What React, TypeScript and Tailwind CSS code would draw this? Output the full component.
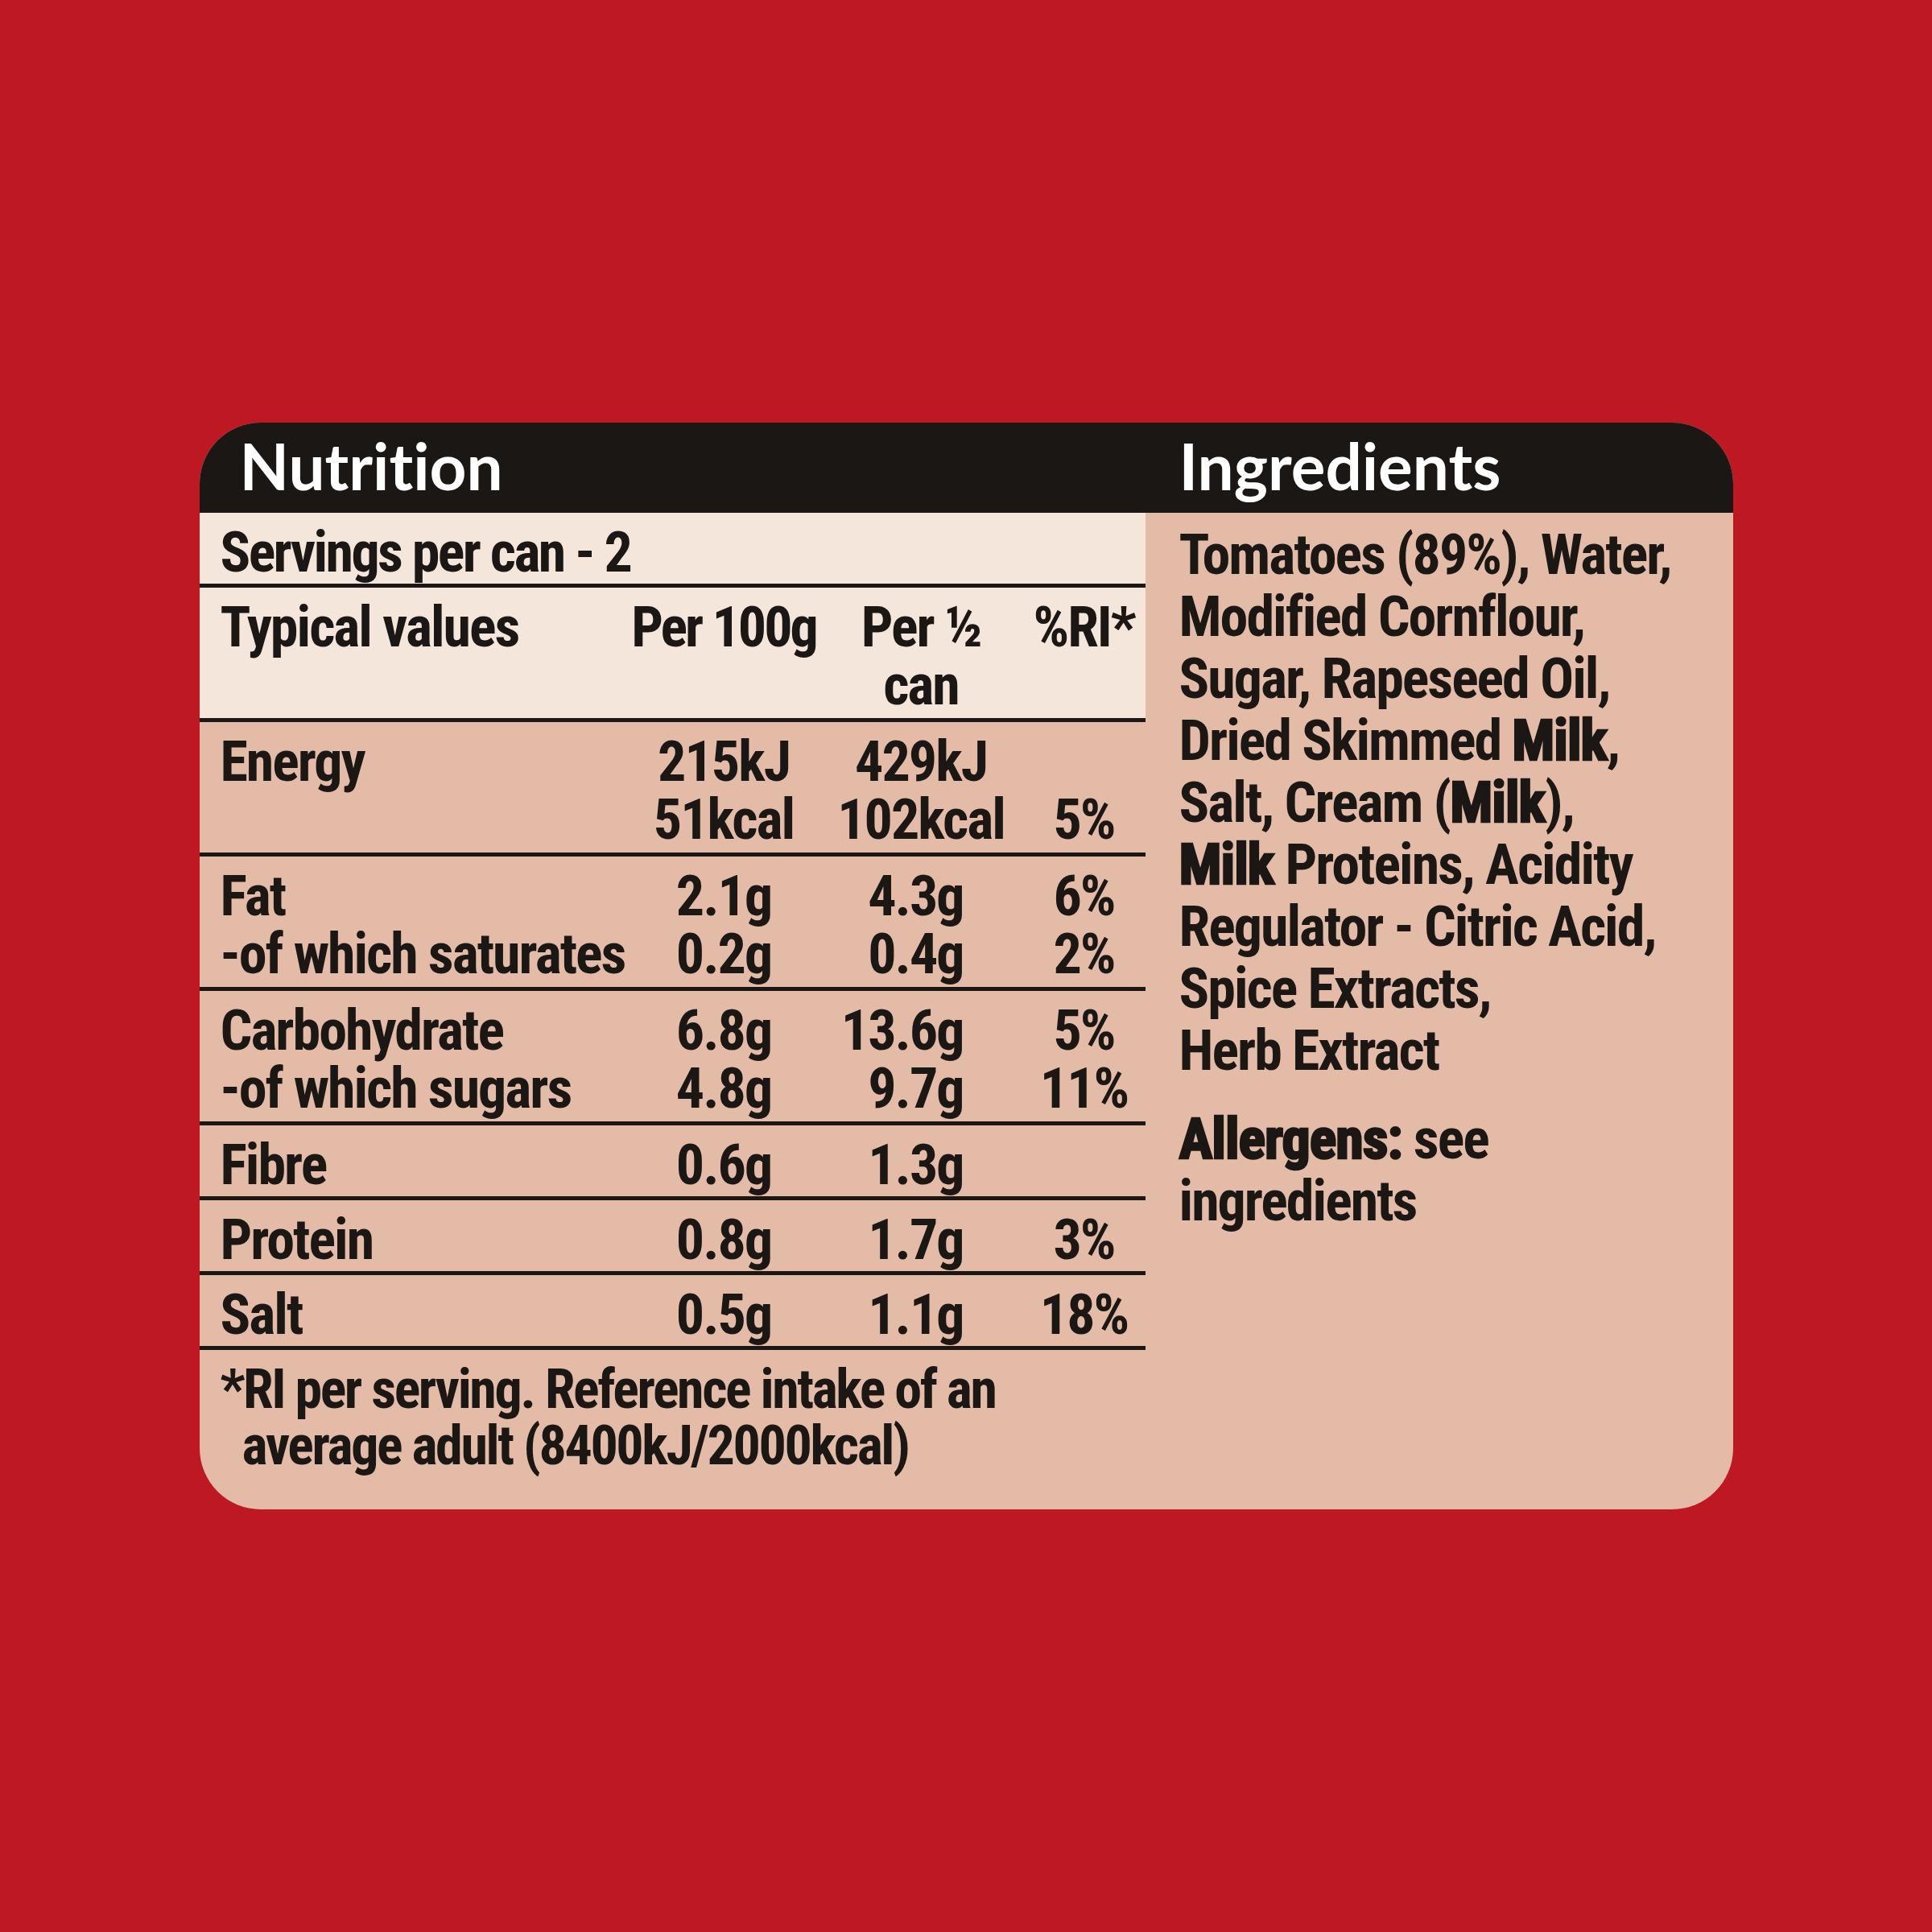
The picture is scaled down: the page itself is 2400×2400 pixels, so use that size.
import React from 'react'

const narrow = "font-['Roboto_Condensed','Open_Sans_Condensed',sans-serif] font-bold"
const heading = "font-['Lato','Open_Sans',sans-serif] font-bold [font-variant-ligatures:none]"
const heavy = '[-webkit-text-stroke:2.5px_#1a1715] tracking-[-1px]'

type Row = {
    label: string[]
    per100: string[]
    perHalf: string[]
    ri: string[]
    centerHalf?: boolean
}

const rows: Row[] = [
    { label: ['Energy'], per100: ['215kJ', '51kcal'], perHalf: ['429kJ', '102kcal'], ri: ['', '5%'], centerHalf: true },
    { label: ['Fat', '-of which saturates'], per100: ['2.1g', '0.2g'], perHalf: ['4.3g', '0.4g'], ri: ['6%', '2%'] },
    { label: ['Carbohydrate', '-of which sugars'], per100: ['6.8g', '4.8g'], perHalf: ['13.6g', '9.7g'], ri: ['5%', '11%'] },
    { label: ['Fibre'], per100: ['0.6g'], perHalf: ['1.3g'], ri: [''] },
    { label: ['Protein'], per100: ['0.8g'], perHalf: ['1.7g'], ri: ['3%'] },
    { label: ['Salt'], per100: ['0.5g'], perHalf: ['1.1g'], ri: ['18%'] },
]

function Lines({ items, className = '' }: { items: string[], className?: string }) {
    return (
        <div className={className}>
            {items.map((t, i) => (
                <div key={i} className="h-[72px] whitespace-nowrap">{t || '\u00a0'}</div>
            ))}
        </div>
    )
}

const cols = 'grid grid-cols-[508px_235px_255px_150px] pl-[26px]'

export default function App() {
    return (
        <div className="w-[2400px] h-[2400px] bg-[#be1823] flex items-center justify-center">
            <div className={`w-[1905px] h-[1350px] rounded-[76px] overflow-hidden bg-[#e4bba7] flex flex-col text-[#1a1715] ${narrow} text-[70px] leading-[72px] tracking-[-2px]`}>
                {/* Header band */}
                <div className="h-[112px] shrink-0 bg-[#1a1715] grid grid-cols-[1175px_1fr] text-white">
                    <div className={`${heading} text-[80px] leading-[80px] tracking-normal pl-[50px] pt-[13px]`}>Nutrition</div>
                    <div className={`${heading} text-[80px] leading-[80px] tracking-normal pl-[42px] pt-[13px]`}>Ingredients</div>
                </div>

                <div className="flex-1 grid grid-cols-[1175px_1fr]">
                    {/* Nutrition table */}
                    <div className="flex flex-col">
                        <div className="bg-[#f5e6dc] border-b-[5px] border-[#1a1715] pl-[26px] pt-[13px] pb-[3px]">
                            <div className="h-[72px] tracking-[-2.6px]">Servings per can - 2</div>
                        </div>
                        <div className={`${cols} bg-[#f5e6dc] border-b-[5px] border-[#1a1715] pt-[13px] pb-[5px]`}>
                            <Lines items={['Typical values']} />
                            <Lines items={['Per 100g']} className="text-center tracking-[-3px]" />
                            <Lines items={['Per ½', 'can']} className="text-center" />
                            <Lines items={['%RI*']} className="text-center" />
                        </div>
                        {rows.map((r) => (
                            <div key={r.label[0]} className={`${cols} border-b-[5px] border-[#1a1715] pt-[13px] ${r.label.length > 1 || r.per100.length > 1 ? 'pb-[5px]' : 'pb-[3px]'}`}>
                                <Lines items={r.label} />
                                <Lines items={r.per100} className="text-center" />
                                <Lines items={r.perHalf} className={r.centerHalf ? 'text-center' : 'text-right pr-[75px]'} />
                                <Lines items={r.ri} className="text-center" />
                            </div>
                        ))}
                        <div className="pl-[26px] pt-[14px] text-[68px] leading-[70px] tracking-[-2.4px] whitespace-nowrap">
                            <div>*RI per serving. Reference intake of an</div>
                            <div className="pl-[27px]">average adult (8400kJ/2000kcal)</div>
                        </div>
                    </div>

                    {/* Ingredients */}
                    <div className="pl-[42px] pt-[14px] leading-[77px]">
                        <div className="whitespace-nowrap">
                            <div>Tomatoes (89%), Water,</div>
                            <div>Modified Cornflour,</div>
                            <div>Sugar, Rapeseed Oil,</div>
                            <div>Dried Skimmed <span className={heavy}>Milk</span>,</div>
                            <div>Salt, Cream (<span className={heavy}>Milk</span>),</div>
                            <div><span className={heavy}>Milk</span> Proteins, Acidity</div>
                            <div>Regulator - Citric Acid,</div>
                            <div>Spice Extracts,</div>
                            <div>Herb Extract</div>
                        </div>
                        <div className="mt-[33px] whitespace-nowrap">
                            <div><span className={heavy}>Allergens:</span> see</div>
                            <div>ingredients</div>
                        </div>
                    </div>
                </div>
            </div>
        </div>
    )
}
